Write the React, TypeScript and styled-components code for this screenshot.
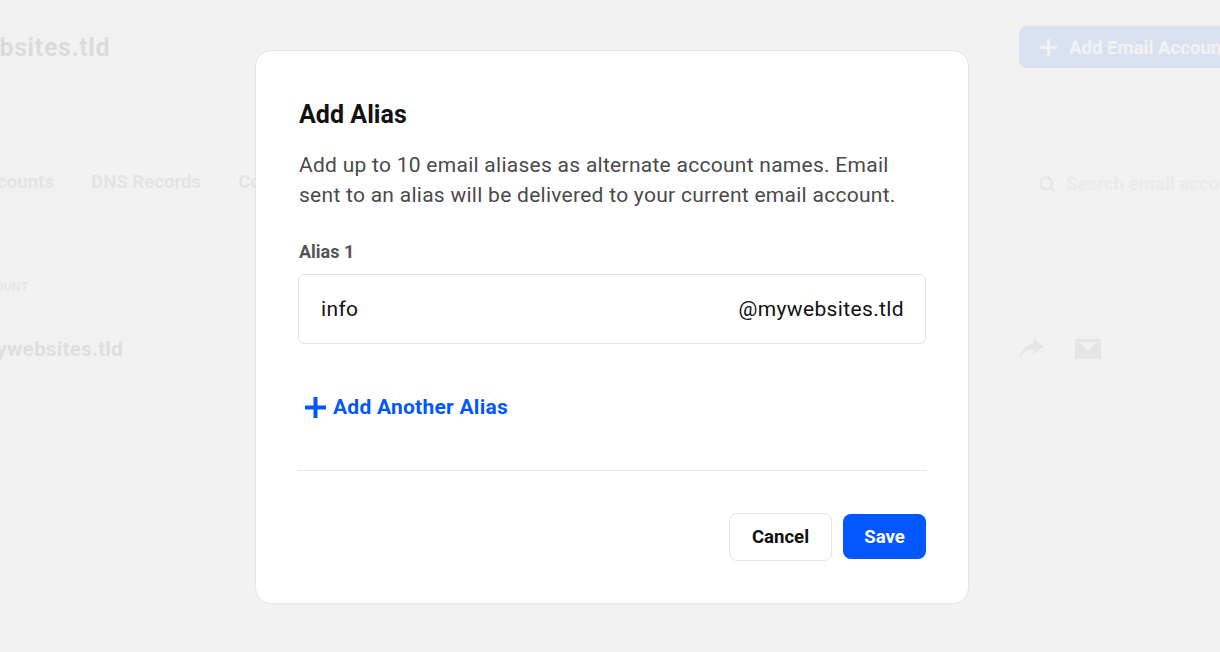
import React from "react"
import styled, { createGlobalStyle } from "styled-components"
import { Search } from "lucide-react"

const GlobalStyle = createGlobalStyle`
  html, body {
    margin: 0;
    padding: 0;
    height: 100%;
    overflow: hidden;
    background: #fff;
    font-family: Roboto, "Liberation Sans", sans-serif;
  }
`

const Screen = styled.div`
  position: relative;
  width: 1220px;
  height: 652px;
  overflow: hidden;
`

const Page = styled.div`
  width: 1340px;
  margin-left: -60px;
  display: flex;
  flex-direction: column;
`

const PageHeader = styled.header`
  height: 160px;
  padding-top: 26px;
  box-sizing: border-box;
  display: flex;
  justify-content: space-between;
  align-items: flex-start;
`

const Domain = styled.h1`
  margin: 0 0 0 -9px;
  padding-top: 1px;
  font-size: 25px;
  line-height: 42px;
  font-weight: 700;
  letter-spacing: 0.6px;
  color: #111;
`

const AddAccount = styled.button`
  width: 261px;
  height: 42px;
  padding: 1px 21px 0;
  display: flex;
  align-items: center;
  gap: 12px;
  border: none;
  border-radius: 8px;
  background: #0057ff;
  color: #fff;
  font: 700 18.6px Roboto, sans-serif;
  white-space: nowrap;
`

const TabBar = styled.nav`
  height: 120px;
  padding-left: 21px;
  box-sizing: border-box;
  display: flex;
  justify-content: space-between;
  align-items: flex-start;
`

const Tabs = styled.div`
  display: flex;
  gap: 9px;
`

const Tab = styled.span<{ $active?: boolean }>`
  height: 42px;
  padding: 1px 14px 0;
  box-sizing: border-box;
  display: flex;
  align-items: center;
  border-radius: 8px;
  background: ${(p) => (p.$active ? "#f0f0f0" : "transparent")};
  color: #666;
  font-size: 18.6px;
  font-weight: 700;
`

const SearchBox = styled.div`
  width: 261px;
  height: 48px;
  padding: 0 19px;
  box-sizing: border-box;
  display: flex;
  align-items: center;
  gap: 10px;
  border-radius: 8px;
  background: #f6f6f6;
  color: #b0b0b0;
  font-size: 18.6px;
  font-weight: 700;
  white-space: nowrap;
  svg {
    color: #777;
  }
`

const ColumnLabel = styled.div`
  padding-left: 30px;
  font-size: 12.6px;
  line-height: 14px;
  font-weight: 700;
  color: #777;
`

const AccountRow = styled.div`
  margin-top: 33px;
  display: flex;
  justify-content: space-between;
  align-items: center;
  height: 42px;
`

const AccountName = styled.span`
  margin-left: -18px;
  padding-top: 1px;
  font-size: 21px;
  font-weight: 700;
  letter-spacing: 0.1px;
  color: #333;
`

const RowIcons = styled.div`
  width: 261px;
  padding-top: 1px;
  display: flex;
  align-items: center;
  gap: 31px;
  color: #777;
`

const Overlay = styled.div`
  position: absolute;
  inset: 0;
  padding: 2px 0 0 4px;
  box-sizing: border-box;
  display: flex;
  align-items: center;
  justify-content: center;
  background: rgba(241, 241, 241, 0.906);
`

const Modal = styled.section`
  width: 714px;
  height: 554px;
  padding: 44px 42px 0;
  box-sizing: border-box;
  display: flex;
  flex-direction: column;
  background: #fff;
  border: 1px solid #e5e5e5;
  border-radius: 16px;
`

const Title = styled.h2`
  margin: 0 0 0 1px;
  font-size: 25px;
  line-height: 40px;
  font-weight: 700;
  letter-spacing: 0.05px;
  color: #111;
`

const Description = styled.p`
  margin: 15px 0 0 1px;
  font-size: 21px;
  line-height: 30px;
  letter-spacing: 0.27px;
  color: #4a4a4a;
`

const FieldLabel = styled.label`
  margin: 30px 0 0 1px;
  font-size: 18px;
  line-height: 24px;
  font-weight: 700;
  color: #555;
`

const InputBox = styled.div`
  margin-top: 10px;
  height: 70px;
  padding: 0 21px 0 22px;
  box-sizing: border-box;
  display: flex;
  justify-content: space-between;
  align-items: center;
  border: 1px solid #e2e2e2;
  border-radius: 6px;
  font-size: 21px;
  letter-spacing: 0.36px;
  color: #111;
`

const AddAlias = styled.button`
  margin-top: 47px;
  padding: 0 0 0 7px;
  height: 32px;
  align-self: flex-start;
  display: flex;
  align-items: center;
  gap: 7px;
  border: none;
  background: none;
  color: #0057ff;
  font: 700 21px Roboto, sans-serif;
  letter-spacing: 0.25px;
`

const Divider = styled.hr`
  width: 100%;
  margin: 47px 0 0;
  border: none;
  border-top: 1px solid #e5e5e5;
`

const Footer = styled.footer`
  margin-top: 42px;
  display: flex;
  justify-content: flex-end;
  align-items: flex-start;
  gap: 11px;
`

const FooterButton = styled.button<{ $primary?: boolean }>`
  height: ${(p) => (p.$primary ? "45px" : "48px")};
  width: ${(p) => (p.$primary ? "83px" : "103px")};
  margin-top: ${(p) => (p.$primary ? "1px" : "0")};
  padding: ${(p) => (p.$primary ? "0" : "0 0 1px")};
  border: ${(p) => (p.$primary ? "none" : "1px solid #e5e5e5")};
  border-radius: 8px;
  background: ${(p) => (p.$primary ? "#0057ff" : "#fff")};
  color: ${(p) => (p.$primary ? "#fff" : "#111")};
  font: 700 18.6px Roboto, sans-serif;
`

function PlusIcon({ size, weight }: { size: number; weight: number }) {
  return (
    <svg width={size} height={size} viewBox={`0 0 ${size} ${size}`} fill="currentColor">
      <rect x={0} y={(size - weight) / 2} width={size} height={weight} />
      <rect x={(size - weight) / 2} y={0} width={weight} height={size} />
    </svg>
  )
}

function ForwardIcon() {
  return (
    <svg width="25" height="21" viewBox="0 0 25 21" fill="currentColor">
      <path d="M14.5 0.5 L24.5 8.5 L14.5 16.5 V11.5 C8 11.5 3.5 14 0.5 20.5 C1.5 12 6.5 6.5 14.5 5.5 Z" />
    </svg>
  )
}

function EnvelopeIcon() {
  return (
    <svg width="26" height="20" viewBox="0 0 26 20" fill="currentColor">
      <path d="M1.5 0 H24.5 A1.5 1.5 0 0 1 26 1.5 V18.5 A1.5 1.5 0 0 1 24.5 20 H1.5 A1.5 1.5 0 0 1 0 18.5 V1.5 A1.5 1.5 0 0 1 1.5 0 Z M3 3 L13 11 L23 3 Z" fillRule="evenodd" />
    </svg>
  )
}

export default function App() {
  return (
    <Screen>
      <GlobalStyle />
      <Page>
        <PageHeader>
          <Domain>mywebsites.tld</Domain>
          <AddAccount>
            <PlusIcon size={17} weight={3} />
            Add Email Account
          </AddAccount>
        </PageHeader>
        <TabBar>
          <Tabs>
            <Tab $active>Accounts</Tab>
            <Tab>DNS Records</Tab>
            <Tab>Connect</Tab>
          </Tabs>
          <SearchBox>
            <Search size={18} strokeWidth={2.5} />
            Search email accounts
          </SearchBox>
        </TabBar>
        <ColumnLabel>ACCOUNT</ColumnLabel>
        <AccountRow>
          <AccountName>info@mywebsites.tld</AccountName>
          <RowIcons>
            <ForwardIcon />
            <EnvelopeIcon />
          </RowIcons>
        </AccountRow>
      </Page>
      <Overlay>
        <Modal>
          <Title>Add Alias</Title>
          <Description>
            Add up to 10 email aliases as alternate account names. Email
            <br />
            sent to an alias will be delivered to your current email account.
          </Description>
          <FieldLabel>Alias 1</FieldLabel>
          <InputBox>
            <span>info</span>
            <span>@mywebsites.tld</span>
          </InputBox>
          <AddAlias>
            <PlusIcon size={21} weight={4} />
            Add Another Alias
          </AddAlias>
          <Divider />
          <Footer>
            <FooterButton>Cancel</FooterButton>
            <FooterButton $primary>Save</FooterButton>
          </Footer>
        </Modal>
      </Overlay>
    </Screen>
  )
}
